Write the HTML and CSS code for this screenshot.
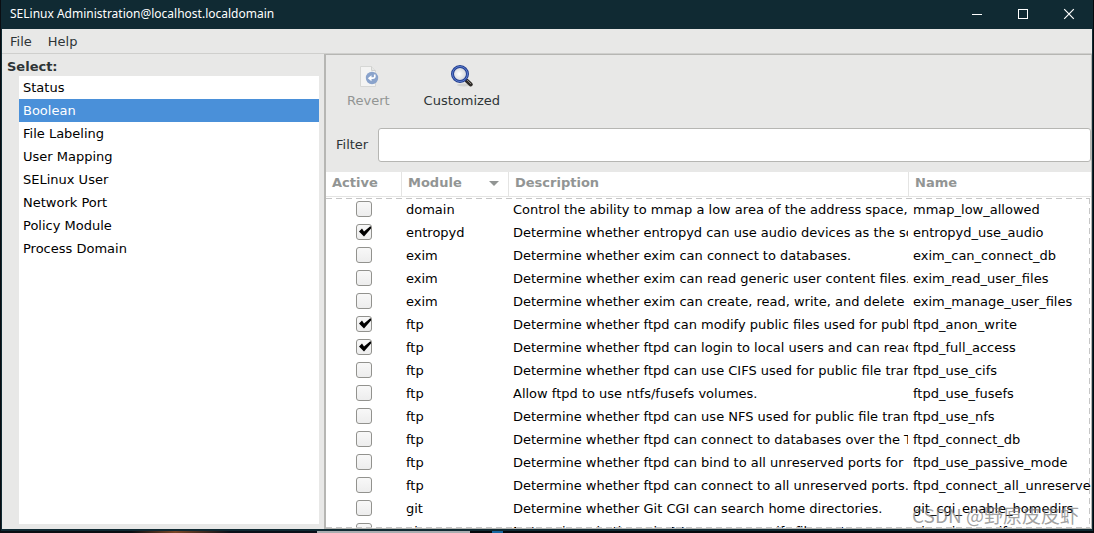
FILE: index.html
```
<!DOCTYPE html>
<html lang="en">
<head>
<meta charset="utf-8">
<title>SELinux Administration</title>
<link rel="stylesheet" href="styles.css">
</head>
<body>
<div class="window">
  <header class="titlebar">
    <h1 class="title">SELinux Administration@localhost.localdomain</h1>
    <div class="controls">
      <button class="control" aria-label="Minimize"><svg width="12" height="12" viewBox="0 0 12 12"><path d="M1 6.500h10" stroke="#fff" fill="none"/></svg></button>
      <button class="control" aria-label="Maximize"><svg width="12" height="12" viewBox="0 0 12 12"><rect x="1.500" y="1.500" width="9" height="9" stroke="#fff" fill="none"/></svg></button>
      <button class="control" aria-label="Close"><svg width="12" height="12" viewBox="0 0 12 12"><path d="M1.200 1.200l9.600 9.600M10.800 1.200l-9.600 9.600" stroke="#fff" stroke-width="1.200" fill="none"/></svg></button>
    </div>
  </header>
  <nav class="menubar">
    <button class="menu">File</button>
    <button class="menu">Help</button>
  </nav>
  <div class="panes">
    <aside class="sidebar">
      <h2 class="select-label">Select:</h2>
      <ul class="page-list">
        <li><button class="page">Status</button></li>
        <li><button class="page selected">Boolean</button></li>
        <li><button class="page">File Labeling</button></li>
        <li><button class="page">User Mapping</button></li>
        <li><button class="page">SELinux User</button></li>
        <li><button class="page">Network Port</button></li>
        <li><button class="page">Policy Module</button></li>
        <li><button class="page">Process Domain</button></li>
      </ul>
    </aside>
    <main class="content">
      <div class="toolbar">
        <button class="tool" disabled>
          <svg width="24" height="24" viewBox="0 0 24 24">
            <path d="M4.500 2.500h11l4 4v16h-15z" fill="#f4f4f3" stroke="#d6d7d5"/>
            <path d="M15.500 2.500v4h4" fill="#e6e7e5" stroke="#d0d1cf"/>
            <circle cx="16" cy="14" r="6.200" fill="#8aa3cb"/>
            <path d="M18.500 10.500c1 2.500 0 3.700-2 3.700h-1.500" fill="none" stroke="#fff" stroke-width="1.700"/>
            <path d="M15.500 11.200v6l-3.700-3z" fill="#fff"/>
          </svg>
          <span>Revert</span>
        </button>
        <button class="tool">
          <svg width="24" height="24" viewBox="0 0 24 24">
            <defs><radialGradient id="lens" cx=".45" cy=".5" r=".6"><stop offset="0" stop-color="#fff"/><stop offset="1" stop-color="#c4c8cf"/></radialGradient></defs>
            <ellipse cx="14" cy="21" rx="7" ry="1.500" fill="#c9cac8" opacity=".7"/>
            <path d="M16.500 16.500l4.300 4" stroke="#2e2b28" stroke-width="4" stroke-linecap="round"/>
            <path d="M17 16l4 4" stroke="#8b8680" stroke-width="1"/>
            <circle cx="10" cy="10" r="7.500" fill="url(#lens)" stroke="#243f91" stroke-width="3"/>
            <circle cx="10" cy="10" r="7.500" fill="none" stroke="#5d7fd0" stroke-width="1"/>
          </svg>
          <span>Customized</span>
        </button>
      </div>
      <div class="filter">
        <label for="filter">Filter</label>
        <input class="filter-input" id="filter" type="text">
      </div>
      <div class="table-view">
        <table class="booleans">
          <thead>
            <tr>
              <th class="col-active">Active</th>
              <th class="col-module"><span class="sort">Module <svg width="10" height="5" viewBox="0 0 10 5"><path d="M0 0h10l-5 5z" fill="#929594"/></svg></span></th>
              <th class="col-description">Description</th>
              <th>Name</th>
            </tr>
          </thead>
          <tbody>
            <tr><td><input type="checkbox" class="check" aria-label="mmap_low_allowed"></td><td>domain</td><td>Control the ability to mmap a low area of the address space, as configured.</td><td>mmap_low_allowed</td></tr>
            <tr><td><input type="checkbox" class="check" aria-label="entropyd_use_audio" checked></td><td>entropyd</td><td>Determine whether entropyd can use audio devices as the source for the entropy feeds.</td><td>entropyd_use_audio</td></tr>
            <tr><td><input type="checkbox" class="check" aria-label="exim_can_connect_db"></td><td>exim</td><td>Determine whether exim can connect to databases.</td><td>exim_can_connect_db</td></tr>
            <tr><td><input type="checkbox" class="check" aria-label="exim_read_user_files"></td><td>exim</td><td>Determine whether exim can read generic user content files.</td><td>exim_read_user_files</td></tr>
            <tr><td><input type="checkbox" class="check" aria-label="exim_manage_user_files"></td><td>exim</td><td>Determine whether exim can create, read, write, and delete generic user content files.</td><td>exim_manage_user_files</td></tr>
            <tr><td><input type="checkbox" class="check" aria-label="ftpd_anon_write" checked></td><td>ftp</td><td>Determine whether ftpd can modify public files used for public file transfer services.</td><td>ftpd_anon_write</td></tr>
            <tr><td><input type="checkbox" class="check" aria-label="ftpd_full_access" checked></td><td>ftp</td><td>Determine whether ftpd can login to local users and can read and write all files.</td><td>ftpd_full_access</td></tr>
            <tr><td><input type="checkbox" class="check" aria-label="ftpd_use_cifs"></td><td>ftp</td><td>Determine whether ftpd can use CIFS used for public file transfer services.</td><td>ftpd_use_cifs</td></tr>
            <tr><td><input type="checkbox" class="check" aria-label="ftpd_use_fusefs"></td><td>ftp</td><td>Allow ftpd to use ntfs/fusefs volumes.</td><td>ftpd_use_fusefs</td></tr>
            <tr><td><input type="checkbox" class="check" aria-label="ftpd_use_nfs"></td><td>ftp</td><td>Determine whether ftpd can use NFS used for public file transfer services.</td><td>ftpd_use_nfs</td></tr>
            <tr><td><input type="checkbox" class="check" aria-label="ftpd_connect_db"></td><td>ftp</td><td>Determine whether ftpd can connect to databases over the TCP network.</td><td>ftpd_connect_db</td></tr>
            <tr><td><input type="checkbox" class="check" aria-label="ftpd_use_passive_mode"></td><td>ftp</td><td>Determine whether ftpd can bind to all unreserved ports for passive mode.</td><td>ftpd_use_passive_mode</td></tr>
            <tr><td><input type="checkbox" class="check" aria-label="ftpd_connect_all_unreserved"></td><td>ftp</td><td>Determine whether ftpd can connect to all unreserved ports.</td><td>ftpd_connect_all_unreserved</td></tr>
            <tr><td><input type="checkbox" class="check" aria-label="git_cgi_enable_homedirs"></td><td>git</td><td>Determine whether Git CGI can search home directories.</td><td>git_cgi_enable_homedirs</td></tr>
            <tr><td><input type="checkbox" class="check" aria-label="git_cgi_use_cifs"></td><td>git</td><td>Determine whether Git CGI can access cifs file systems.</td><td>git_cgi_use_cifs</td></tr>
          </tbody>
        </table>
      </div>
    </main>
  </div>
</div>
<div class="watermark">CSDN @野原皮皮虾</div>
</body>
</html>
```

FILE: styles.css
```
* {
  box-sizing: border-box;
}

body {
  margin: 0;
  height: 100vh;
  padding: 0 1px 2px;
  overflow: hidden;
  background: linear-gradient(90deg, #0a0d12 0 12%, #7a4526 16%, #0a0f18 21% 29%, #a9adb0 29% 43%, #05080c 43% 45%, #1767a0 45% 46%, #05080c 46%);
  font: 13px/23px "DejaVu Sans", sans-serif;
  color: #2e3436;
}

button {
  margin: 0;
  padding: 0;
  border: 0;
  background: none;
  color: inherit;
  font: inherit;
}

.window {
  display: flex;
  flex-direction: column;
  height: 100%;
  border: solid #102a33;
  border-width: 0 1px 2px;
  background: #e8e8e7;
}

.titlebar {
  display: flex;
  flex: none;
  align-items: center;
  justify-content: space-between;
  height: 29px;
  padding: 0 0 2px 8px;
  background: #102a33;
  color: #fff;
}

.title {
  margin: 0;
  font: 12px/26px "Noto Sans", sans-serif;
}

.controls {
  display: flex;
}

.control {
  display: grid;
  place-items: center;
  width: 46px;
  height: 26px;
}

.menubar {
  display: flex;
  flex: none;
  gap: 16px;
  height: 25px;
  padding: 0 8px;
  border-bottom: 1px solid #cfcfcd;
}

.panes {
  display: flex;
  flex: 1;
  min-height: 0;
}

.sidebar {
  display: flex;
  flex: none;
  flex-direction: column;
  width: 322px;
  padding: 4px 5px 5px;
}

.select-label {
  margin: 0;
  font-size: 13px;
  line-height: 18px;
}

.page-list {
  flex: 1;
  margin: 0 0 0 12px;
  padding: 0;
  background: #fff;
  color: #000;
  list-style: none;
}

.page {
  display: block;
  width: 100%;
  padding: 0 4px;
  text-align: left;
}

.page.selected {
  background: #4a90d9;
  color: #fff;
}

.content {
  display: flex;
  flex: 1;
  flex-direction: column;
  min-width: 0;
  border: 1px solid #b6b6b3;
  border-left-width: 2px;
}

.toolbar {
  display: flex;
  flex: none;
  gap: 34px;
  height: 64px;
  padding: 9px 21px 0;
}

.tool {
  display: flex;
  flex-direction: column;
  align-items: center;
  gap: 1px;
}

.tool:disabled {
  color: #929594;
}

.filter {
  display: flex;
  flex: none;
  align-items: center;
  gap: 10px;
  height: 53px;
  padding: 0 0 2px 10px;
}

.filter-input {
  flex: 1;
  min-width: 0;
  height: 34px;
  padding: 0 8px;
  border: 1px solid #b6b6b3;
  border-radius: 3px;
  background: #fff;
  font: inherit;
}

.table-view {
  position: relative;
  flex: 1;
  min-height: 0;
  overflow: hidden;
  background: #fff;
}

.table-view::after {
  content: "";
  position: absolute;
  inset: 26px 1px 0 0;
  background:
    repeating-linear-gradient(90deg, #c6c6c6 0 6px, transparent 6px 10px) top / 100% 1px no-repeat,
    repeating-linear-gradient(90deg, #c6c6c6 0 6px, transparent 6px 10px) bottom / 100% 1px no-repeat,
    repeating-linear-gradient(#c6c6c6 0 6px, transparent 6px 10px) right / 1px 100% no-repeat;
  pointer-events: none;
}

.booleans {
  width: 100%;
  border-collapse: separate;
  border-spacing: 0;
  table-layout: fixed;
  color: #000;
}

.booleans th {
  height: 25px;
  padding: 0 6px 2px;
  border-right: 1px solid #e4e4e3;
  border-bottom: 1px solid #e4e4e3;
  color: #929594;
  line-height: 22px;
  text-align: left;
}

.booleans th:last-child {
  border-right: 0;
}

.col-active {
  width: 76px;
}

.col-module {
  width: 107px;
}

.col-description {
  width: 400px;
}

.sort {
  display: flex;
  align-items: center;
  justify-content: space-between;
  padding-right: 3px;
}

.booleans td {
  height: 23px;
  padding: 2px 0 0 4px;
  overflow: hidden;
  line-height: 21px;
  white-space: nowrap;
}

.booleans td:first-child {
  padding: 0;
  text-align: center;
}

.booleans td:nth-child(3) {
  border-right: 1px solid transparent;
}

.check {
  display: block;
  width: 16px;
  height: 16px;
  margin: 0 auto;
  border: 1px solid #92928e;
  border-radius: 3px;
  background: linear-gradient(#f8f8f8, #ededed);
  appearance: none;
}

.check:checked::before {
  content: "";
  display: block;
  width: 14px;
  height: 14px;
  background: #000;
  clip-path: polygon(2px 7px, 5px 4px, 7px 7px, 13px 2px, 14px 2px, 14px 4px, 7px 12px);
}

.watermark {
  position: absolute;
  right: 15px;
  bottom: 4px;
  color: rgba(120, 120, 120, 0.7);
  font: 19px/28px "Noto Sans CJK SC", sans-serif;
  pointer-events: none;
}
```
